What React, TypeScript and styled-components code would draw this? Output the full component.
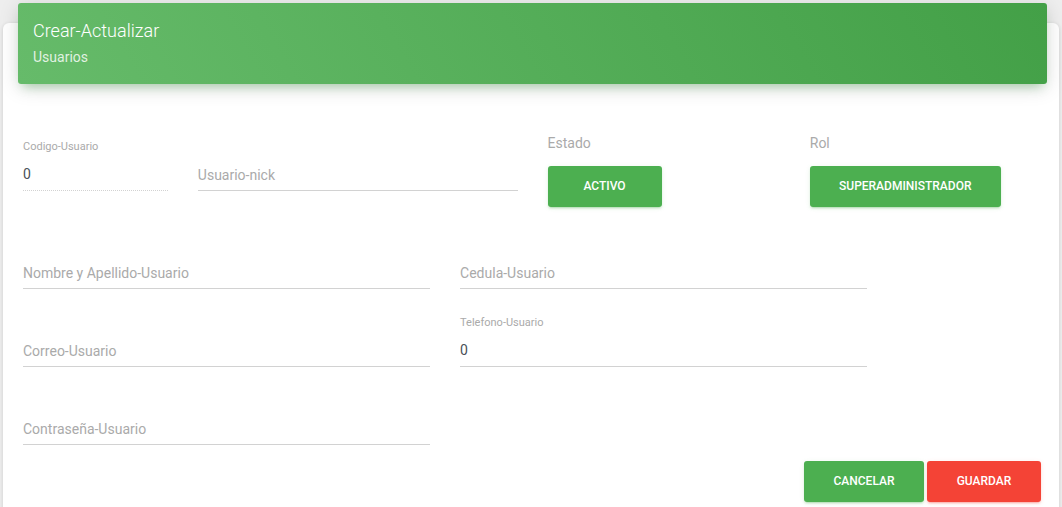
import React from "react";
import styled, { createGlobalStyle } from "styled-components";

const Global = createGlobalStyle`
  html, body { margin: 0; padding: 0; }
  body {
    background: #eeeeee;
    font-family: Roboto, "Noto Sans", "Liberation Sans", sans-serif;
    -webkit-font-smoothing: antialiased;
  }
  * { box-sizing: border-box; }
`;

const Page = styled.div`
  padding: 23px 3px 0 3px;
  height: 507px;
  overflow: hidden;
`;

const Card = styled.div`
  background: #fff;
  border-radius: 6px;
  box-shadow: 0 1px 4px 0 rgba(0, 0, 0, 0.14);
  min-height: 520px;
  display: flex;
  flex-direction: column;
`;

const CardHeader = styled.div`
  margin: -20px 12px 0 15px;
  padding: 15px;
  height: 81px;
  border-radius: 3px;
  background: linear-gradient(60deg, #66bb6a, #43a047);
  box-shadow: 0 4px 20px 0 rgba(0, 0, 0, 0.14), 0 7px 10px -5px rgba(76, 175, 80, 0.4);
  color: #fff;
`;

const CardTitle = styled.h4`
  margin: 0;
  font-size: 18px;
  line-height: 25px;
  font-weight: 300;
`;

const CardCategory = styled.p`
  margin: 4px 0 0 0;
  font-size: 14px;
  line-height: 21px;
  font-weight: 400;
  color: rgba(255, 255, 255, 0.82);
`;

const CardBody = styled.div`
  padding: 49px 2px 0 5px;
  display: flex;
  flex-direction: column;
`;

const Row = styled.div<{ $mt?: number }>`
  display: grid;
  grid-template-columns: repeat(12, 1fr);
  align-items: start;
  margin-top: ${(p) => p.$mt ?? 0}px;
`;

const Col = styled.div<{ $span: number; $mt?: number }>`
  grid-column: span ${(p) => p.$span};
  padding: 0 15px;
  margin-top: ${(p) => p.$mt ?? 0}px;
  min-width: 0;
`;

const FieldBox = styled.div`
  display: flex;
  flex-direction: column;
`;

const SmallLabel = styled.label<{ $show: boolean }>`
  font-size: 11px;
  line-height: 13px;
  height: 13px;
  margin-bottom: 2px;
  color: #aaaaaa;
  visibility: ${(p) => (p.$show ? "visible" : "hidden")};
`;

const Input = styled.input<{ $dotted?: boolean; $placeholderOnly?: boolean }>`
  height: 36px;
  border: none;
  border-bottom: 1px ${(p) => (p.$dotted ? "dotted" : "solid")} #d2d2d2;
  outline: none;
  background: transparent;
  padding: ${(p) => (p.$placeholderOnly ? "4px 0 0 0" : "2px 0 0 0")};
  font-family: inherit;
  font-size: 14px;
  color: #495057;
  width: 100%;
  &::placeholder {
    color: #aaaaaa;
    opacity: 1;
  }
`;

const GroupLabel = styled.div`
  font-size: 14px;
  line-height: 20px;
  color: #aaaaaa;
  margin-bottom: 13px;
`;

const Button = styled.button<{ $color: "green" | "red"; $width?: number }>`
  border: none;
  border-radius: 3px;
  padding: 12px 0;
  ${(p) => (p.$width ? `width: ${p.$width}px;` : "padding: 12px 30px;")}
  font-family: inherit;
  font-size: 12px;
  line-height: 17px;
  font-weight: 500;
  text-transform: uppercase;
  color: #fff;
  cursor: pointer;
  background: ${(p) => (p.$color === "green" ? "#4caf50" : "#f44336")};
  box-shadow: ${(p) =>
    p.$color === "green"
      ? "0 2px 2px 0 rgba(76,175,80,.14), 0 3px 1px -2px rgba(76,175,80,.2), 0 1px 5px 0 rgba(76,175,80,.12)"
      : "0 2px 2px 0 rgba(244,67,54,.14), 0 3px 1px -2px rgba(244,67,54,.2), 0 1px 5px 0 rgba(244,67,54,.12)"};
`;

const Actions = styled.div`
  display: flex;
  justify-content: flex-end;
  gap: 3px;
  padding-right: 1px;
`;

type FieldProps = {
  label: string;
  value?: string;
  dotted?: boolean;
};

const Field: React.FC<FieldProps> = ({ label, value, dotted }) => {
  const hasValue = value !== undefined;
  return (
    <FieldBox>
      <SmallLabel $show={hasValue}>{label}</SmallLabel>
      <Input
        $dotted={dotted}
        $placeholderOnly={!hasValue}
        placeholder={hasValue ? undefined : label}
        defaultValue={value}
        readOnly={dotted}
      />
    </FieldBox>
  );
};

export default function App() {
  return (
    <>
      <Global />
      <Page>
        <Card>
          <CardHeader>
            <CardTitle>Crear-Actualizar</CardTitle>
            <CardCategory>Usuarios</CardCategory>
          </CardHeader>
          <CardBody>
            <Row>
              <Col $span={2} $mt={7}>
                <Field label="Codigo-Usuario" value="0" dotted />
              </Col>
              <Col $span={4} $mt={7}>
                <Field label="Usuario-nick" />
              </Col>
              <Col $span={3}>
                <GroupLabel>Estado</GroupLabel>
                <Button $color="green" $width={114}>Activo</Button>
              </Col>
              <Col $span={3}>
                <GroupLabel>Rol</GroupLabel>
                <Button $color="green" $width={191}>Superadministrador</Button>
              </Col>
            </Row>
            <Row $mt={31}>
              <Col $span={5}>
                <Field label="Nombre y Apellido-Usuario" />
              </Col>
              <Col $span={5}>
                <Field label="Cedula-Usuario" />
              </Col>
            </Row>
            <Row $mt={27}>
              <Col $span={5}>
                <Field label="Correo-Usuario" />
              </Col>
              <Col $span={5}>
                <Field label="Telefono-Usuario" value="0" />
              </Col>
            </Row>
            <Row $mt={27}>
              <Col $span={5}>
                <Field label="Contraseña-Usuario" />
              </Col>
            </Row>
            <Row $mt={16}>
              <Col $span={12}>
                <Actions>
                  <Button $color="green" $width={120}>Cancelar</Button>
                  <Button $color="red" $width={114}>Guardar</Button>
                </Actions>
              </Col>
            </Row>
          </CardBody>
        </Card>
      </Page>
    </>
  );
}
